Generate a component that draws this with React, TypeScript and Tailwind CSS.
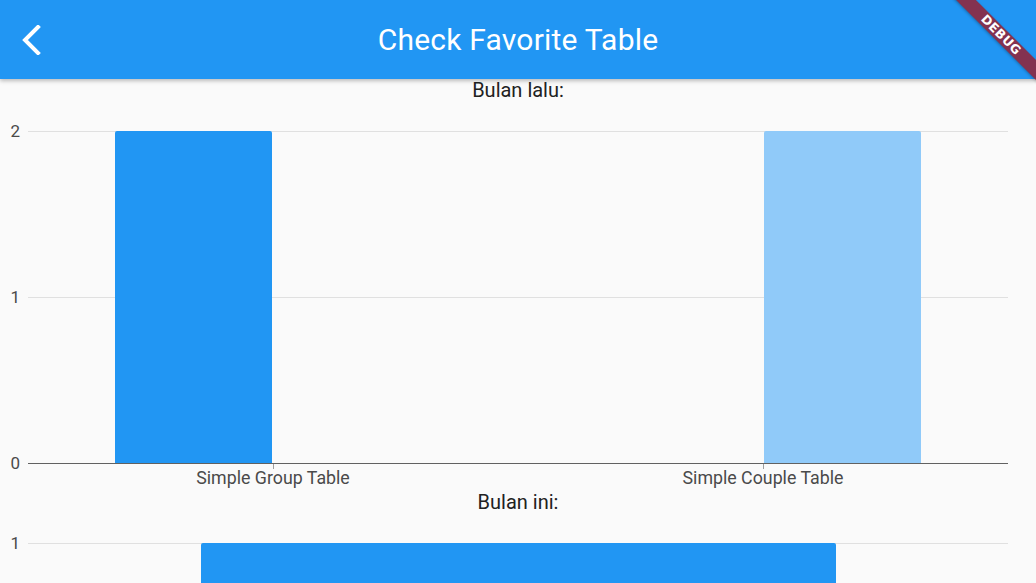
import React from 'react';

const lastMonth = [
  { label: 'Simple Group Table', bars: [2, 0] },
  { label: 'Simple Couple Table', bars: [0, 2] },
];

const barColors = ['bg-[#2196f3]', 'bg-[#90caf9]'];

function BackChevron() {
  return (
    <svg width="20" height="30" viewBox="0 0 20 30" className="block">
      <polyline points="16,2 3,15 16,28" fill="none" stroke="white" strokeWidth="4" strokeLinecap="square" strokeLinejoin="miter" />
    </svg>
  );
}

export default function App() {
  const max = 2;
  const plotH = 332;
  return (
    <div className="relative w-full h-[583px] overflow-hidden bg-[#fafafa] font-['Roboto','Liberation_Sans',sans-serif]">
      <header className="relative z-10 h-[79px] bg-[#2196f3] flex items-center shadow-[0_2px_4px_rgba(0,0,0,0.25)]">
        <div className="w-[79px] h-full flex items-center pl-[22px]">
          <BackChevron />
        </div>
        <h1 className="flex-1 text-center text-white text-[30px] font-normal pr-[79px] tracking-[0.2px]">
          Check Favorite Table
        </h1>
      </header>

      {/* Bulan lalu */}
      <p className="text-center text-[20px] leading-[23px] text-[#212121]">Bulan lalu:</p>
      <div className="flex pt-[29px]">
        <div className="relative w-[28px]">
          <span className="absolute right-[8px] -top-[11px] text-[17px] leading-[22px] text-[#4a4a4a]">2</span>
          <span className="absolute right-[8px] top-[155px] text-[17px] leading-[22px] text-[#4a4a4a]">1</span>
          <span className="absolute right-[8px] top-[321px] text-[17px] leading-[22px] text-[#4a4a4a]">0</span>
        </div>
        <div className="flex-1 mr-[28px]">
          <div className="relative h-[333px] border-b border-[#616161]">
            <div className="absolute left-0 right-0 top-0 h-px bg-[#e0e0e0]" />
            <div className="absolute left-0 right-0 top-[166px] h-px bg-[#e0e0e0]" />
            <div className="relative flex h-full">
              {lastMonth.map((g) => (
                <div key={g.label} className="flex-1 flex justify-center items-end gap-[2px]">
                  {g.bars.map((v, i) => (
                    <div
                      key={i}
                      className={`w-[157px] rounded-t-[2px] ${v > 0 ? barColors[i] : ''}`}
                      style={{ height: (v / max) * plotH }}
                    />
                  ))}
                </div>
              ))}
            </div>
          </div>
          <div className="flex">
            {lastMonth.map((g) => (
              <div key={g.label} className="flex-1 flex flex-col items-center">
                <div className="w-px h-[5px] bg-[#9e9e9e]" />
                <span className="-mt-[2px] text-[17.8px] leading-[22px] text-[#4a4a4a]">{g.label}</span>
              </div>
            ))}
          </div>
        </div>
      </div>

      {/* Bulan ini */}
      <p className="mt-[2px] text-center text-[20px] leading-[23px] text-[#212121]">Bulan ini:</p>
      <div className="flex pt-[29px]">
        <div className="relative w-[28px]">
          <span className="absolute right-[8px] -top-[11px] text-[17px] leading-[22px] text-[#4a4a4a]">1</span>
        </div>
        <div className="flex-1 mr-[28px] relative h-[60px]">
          <div className="absolute left-0 right-0 top-0 h-px bg-[#e0e0e0]" />
          <div className="relative flex justify-center h-full">
            <div className="w-[635px] h-full rounded-t-[2px] bg-[#2196f3]" />
          </div>
        </div>
      </div>

      {/* debug banner */}
      <div className="absolute z-20 left-[941px] top-[28px] w-[120px] h-[14px] rotate-45 bg-[#833250] shadow-[0_1px_3px_rgba(0,0,0,0.3)] flex items-center justify-center">
        <span className="text-white text-[12.5px] font-black tracking-[0.4px] leading-none font-['DejaVu_Sans','Roboto',sans-serif]">DEBUG</span>
      </div>
    </div>
  );
}
